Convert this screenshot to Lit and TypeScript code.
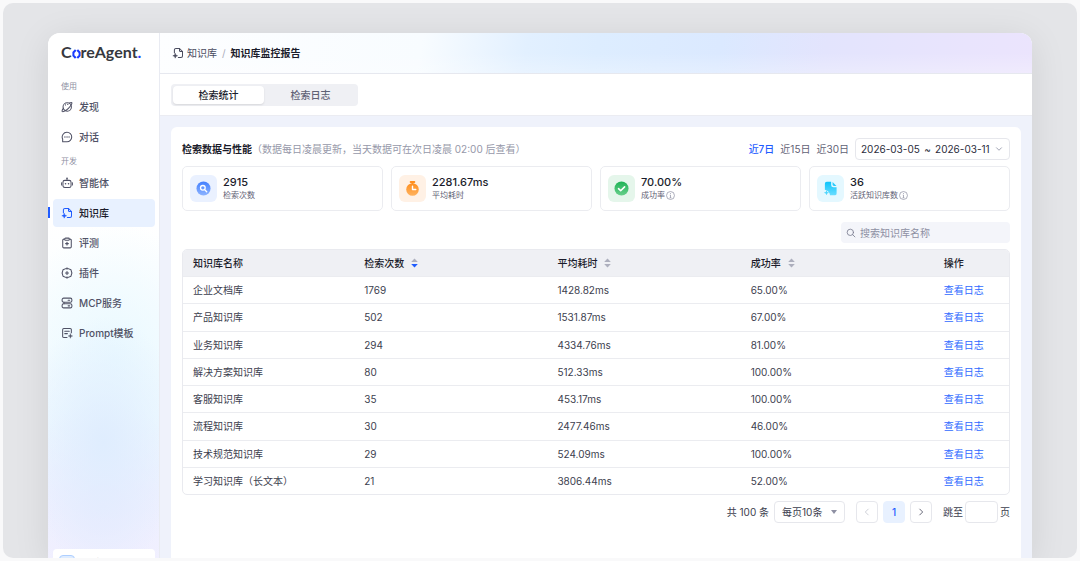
import { LitElement, html, css, svg } from "lit";
import { customElement, state } from "lit/decorators.js";
import { classMap } from "lit/directives/class-map.js";

const icons = {
  discover: svg`<circle cx="8.3" cy="8" r="5.6"/><path d="M3.4 9.6C1.8 11.6 1 13.2 1.6 13.900c1 1.100 5-1 8.300-4.200s5.300-6.700 4.400-7.600c-.5-.5-1.500-.2-2.900.600"/><path d="M6 5.200h.1M9 4.500h.1" stroke-width="1.500"/>`,
  chat: svg`<path d="M8 1.700a6.300 6.300 0 1 1 0 12.600H2.200v-3.600A6.300 6.300 0 0 1 8 1.700z"/><path d="M5.200 8h.1M8 8h.1M10.700 8h.1" stroke-width="1.700"/>`,
  robot: svg`<rect x="2.600" y="4.500" width="10.800" height="9.500" rx="2.500"/><path d="M8 4.500V1.800M.5 7.700v3M15.500 7.700v3"/><path d="M6 9h.1M10 9h.1" stroke-width="2"/><path d="M8 1.500h.1" stroke-width="2"/>`,
  knowledge: svg`<path d="M3.200 7.500V4a2 2 0 0 1 2-2H10l4 4v6a2 2 0 0 1-2 2H8.500"/><path d="M10 2v2.500A1.500 1.500 0 0 0 11.500 6H14"/><path d="M4.300 8.500l.9 2.300 2.300.9-2.300.9-.9 2.300-.9-2.300-2.300-.9 2.300-.9z" fill="currentColor" stroke-width=".6"/>`,
  evaluate: svg`<path d="M4.500 2.800H3.800A1.500 1.500 0 0 0 2.300 4.300v8.700a1.500 1.500 0 0 0 1.500 1.500h8.400a1.500 1.500 0 0 0 1.500-1.500V4.300a1.500 1.500 0 0 0-1.500-1.500h-.7"/><rect x="5" y="1.500" width="6" height="2.800" rx="1"/><path d="M8 7v3.600M6.200 8.800h3.600" stroke-width="1.600"/>`,
  plugin: svg`<path d="M8 1.500l5.300 2.200 1.200 4.300-1.200 4.200L8 14.500l-5.300-2.300L1.500 8l1.200-4.300z"/><path d="M8 6v4M6 8h4" stroke-width="1.500"/><path d="M8 1.500v1.500M8 13v1.500"/>`,
  server: svg`<rect x="1.500" y="1.500" width="13" height="5.400" rx="2"/><rect x="1.500" y="9.100" width="13" height="5.400" rx="2"/><path d="M9.500 4.200h2M9.500 11.800h2M4 6.900v2.200"/>`,
  prompt: svg`<path d="M13.800 7.500V3.500A1.500 1.500 0 0 0 12.300 2H3.700a1.500 1.500 0 0 0-1.500 1.500v9A1.500 1.500 0 0 0 3.700 14H8M5 5.600h6M5 8.800h3.500"/><path d="M12.500 9l.8 2.200 2.200.8-2.200.8-.8 2.200-.8-2.200-2.200-.8 2.200-.8z" fill="currentColor" stroke-width=".5"/>`,
};
type IconName = keyof typeof icons;

const icon = (name: IconName) => html`<svg class="icon" viewBox="0 0 16 16" aria-hidden="true">${icons[name]}</svg>`;

const stroke = (name: string, path: string) =>
  html`<svg class="stroke ${name}" viewBox="0 0 12 12" aria-hidden="true"><path d=${path} /></svg>`;

const statIcons = [
  svg`<defs><linearGradient id="g" x2="0" y2="1"><stop stop-color="#4380ff"/><stop offset="1" stop-color="#8db3ff"/></linearGradient></defs>
    <circle cx="8" cy="8" r="7.500" fill="url(#g)"/><circle cx="7.300" cy="7.300" r="2.500" fill="none" stroke="#fff" stroke-width="1.400"/><path d="M9.200 9.200l2.200 2.200" stroke="#fff" stroke-width="1.500" stroke-linecap="round"/>`,
  svg`<defs><linearGradient id="g" x2="0" y2="1"><stop stop-color="#ff8f1f"/><stop offset="1" stop-color="#ffb25e"/></linearGradient></defs>
    <rect x="5" y="0" width="6" height="2" rx="1" fill="#ff8f1f"/><path d="M7 1h2v3H7z" fill="#ff8f1f"/><circle cx="8" cy="9" r="6.700" fill="url(#g)"/><path d="M8 5.500V9h3.500" fill="none" stroke="#fff" stroke-width="1.500" stroke-linecap="round" stroke-linejoin="round"/>`,
  svg`<defs><linearGradient id="g" x2="0" y2="1"><stop stop-color="#1fb356"/><stop offset="1" stop-color="#68cf8b"/></linearGradient></defs>
    <circle cx="8" cy="8" r="7.500" fill="url(#g)"/><path d="M4.800 8.200l2.300 2.200 4.200-4.200" fill="none" stroke="#fff" stroke-width="1.700" stroke-linecap="round" stroke-linejoin="round"/>`,
  svg`<defs><linearGradient id="g" x2="0" y2="1"><stop stop-color="#0cc4fb"/><stop offset="1" stop-color="#6addff"/></linearGradient></defs>
    <path d="M4 .8h4.700v3.400a2.500 2.500 0 0 0 2.500 2.500h3.300v6.500a2 2 0 0 1-2 2H7.500a7 7 0 0 0-5.500-6V2.800a2 2 0 0 1 2-2z" fill="url(#g)"/><path d="M10.200 1l4.200 4.200h-2.700a1.500 1.500 0 0 1-1.500-1.500z" fill="#2ccbfb"/><path d="M3.700 9.700l.8 2 2 .8-2 .8-.8 2-.8-2-2-.8 2-.8z" fill="#4fd6fd"/>`,
];

const stats = [
  { value: "2915", label: "检索次数", tone: "blue", info: false },
  { value: "2281.67ms", label: "平均耗时", tone: "orange", info: false },
  { value: "70.00%", label: "成功率", tone: "green", info: true },
  { value: "36", label: "活跃知识库数", tone: "cyan", info: true },
];

const rows = [
  ["企业文档库", "1769", "1428.82ms", "65.00%"],
  ["产品知识库", "502", "1531.87ms", "67.00%"],
  ["业务知识库", "294", "4334.76ms", "81.00%"],
  ["解决方案知识库", "80", "512.33ms", "100.00%"],
  ["客服知识库", "35", "453.17ms", "100.00%"],
  ["流程知识库", "30", "2477.46ms", "46.00%"],
  ["技术规范知识库", "29", "524.09ms", "100.00%"],
  ["学习知识库（长文本）", "21", "3806.44ms", "52.00%"],
];

const base = css`
  *, *::before { box-sizing: border-box; }
  a { color: inherit; text-decoration: none; }
  button, input, select { font: inherit; color: inherit; margin: 0; padding: 0; border: 0; background: none; }
  button { cursor: pointer; }
  .icon { width: 12px; height: 12px; flex: none; fill: none; stroke: currentColor; stroke-width: 1.4; stroke-linecap: round; stroke-linejoin: round; }
  .stroke { width: 10px; height: 10px; flex: none; fill: none; stroke: currentColor; stroke-width: 1; stroke-linecap: round; stroke-linejoin: round; }
`;

@customElement("side-nav")
export class SideNav extends LitElement {
  static styles = [base, css`
    :host {
      display: flex; flex-direction: column; padding: 9px 4px 0 5px; border-right: 1px solid #e9ebf2; color: #505266;
      background:
        radial-gradient(ellipse 75% 24% at 50% 78%, #dfedfe 0%, #dfedfe00 100%),
        radial-gradient(ellipse 80% 20% at 50% 90%, #e9ebfe 0%, #e9ebfe00 100%),
        radial-gradient(ellipse 90% 26% at 60% 62%, #eaf9ff 0%, #eaf9ff00 100%),
        linear-gradient(#fff 36%, #f8fdff 55%, #f0f9ff 75%, #f1f2ff 90%, #f3f1ff);
    }
    .logo { display: flex; align-items: center; height: 20px; padding-left: 8px; font: 700 16px/20px Lato, sans-serif; color: #36383e; }
    .logo svg { width: 9px; height: 10px; fill: none; stroke: #1a3cff; stroke-width: 2; margin-top: 3px; }
    .dot { color: #1a3cff; }
    .group { font-size: 8px; line-height: 12px; color: #8e90a3; padding-left: 8px; margin: 18px 0 0; font-weight: 400; }
    .later { margin-top: 4px; padding-bottom: 1px; }
    .list { display: grid; gap: 2px; margin: 0; padding: 1px 0 0; list-style: none; }
    .item { display: flex; align-items: center; gap: 6px; height: 28px; padding-left: 8px; border-radius: 4px; font-size: 10px; font-weight: 500; white-space: nowrap; }
    .active { background: #e8f1ff; color: #1b1c2b; position: relative; }
    .active .icon { color: #1f5cff; }
    .active::before { content: ""; position: absolute; left: -5px; top: 8px; width: 2px; height: 11px; background: #1f5cff; }
    .space { display: flex; align-items: center; gap: 6px; flex: none; height: 28px; margin: auto 0 -19px; padding-left: 6px; border-radius: 4px; background: #fff; font-size: 10px; }
    .badge { width: 16px; height: 16px; border: 1px solid #aecfff; border-radius: 4px; background: #deecff; color: #5a9bff; font-size: 8px; line-height: 14px; text-align: center; }
  `];

  private group(items: [IconName, string][], active = "") {
    return html`<ul class="list">${items.map(([name, label]) => html`
      <li><a href="#" class=${classMap({ item: true, active: label === active })}>${icon(name)}${label}</a></li>`)}</ul>`;
  }

  render() {
    return html`
      <div class="logo">C<svg viewBox="0 0 9 10" aria-hidden="true"><path d="M3.700 1L1.400 3.500v3L3.700 9M5.300 1l2.300 2.500v3L5.300 9"/></svg>reAgent<span class="dot">.</span></div>
      <h2 class="group">使用</h2>
      ${this.group([["discover", "发现"], ["chat", "对话"]])}
      <h2 class="group later">开发</h2>
      ${this.group([["robot", "智能体"], ["knowledge", "知识库"], ["evaluate", "评测"], ["plugin", "插件"], ["server", "MCP服务"], ["prompt", "Prompt模板"]], "知识库")}
      <div class="space"><span class="badge">体</span>体验空间</div>`;
  }
}

@customElement("stat-card")
export class StatCard extends LitElement {
  static properties = { stat: { attribute: false }, index: { type: Number } };
  declare stat: (typeof stats)[number];
  declare index: number;

  static styles = [base, css`
    :host { display: flex; align-items: center; gap: 6px; height: 45px; padding: 0 7px; border: 1px solid #ebecf0; border-radius: 5px; }
    .tile { display: grid; place-items: center; width: 27px; height: 27px; border-radius: 6px; }
    .tile svg { width: 15px; height: 15px; }
    .blue { background: #eaf1ff; } .orange { background: #fff1e5; } .green { background: #e5f6eb; } .cyan { background: #e4f8ff; }
    .value { font-size: 11px; line-height: 14px; font-weight: 500; color: #1b1c2b; }
    .label { display: flex; align-items: center; gap: 1px; font-size: 8px; line-height: 13px; color: #5f6175; }
    .info { width: 9px; height: 9px; fill: none; stroke: #8e90a3; stroke-width: .8; }
  `];

  render() {
    const { value, label, tone, info } = this.stat;
    return html`
      <div class="tile ${tone}"><svg viewBox="0 0 16 16" aria-hidden="true">${statIcons[this.index]}</svg></div>
      <div>
        <div class="value">${value}</div>
        <div class="label">${label}${info ? html`<svg class="info" viewBox="0 0 10 10" aria-hidden="true"><circle cx="5" cy="5" r="4.400"/><path d="M5 2.300v1M4.200 4.500H5v3M4 7.500h2"/></svg>` : ""}</div>
      </div>`;
  }
}

@customElement("report-table")
export class ReportTable extends LitElement {
  static styles = [base, css`
    :host { display: block; border: 1px solid #e9eaef; border-radius: 5px; overflow: hidden; }
    .table { width: 100%; height: 244px; table-layout: fixed; border-collapse: separate; border-spacing: 0; text-align: left; color: #3c3e4e; }
    .name { width: 171px; } .num { width: 193px; } .act { width: 75px; }
    .table th, .table td { padding: 0 10px; font-size: 10px; line-height: 14px; white-space: nowrap; }
    .table th { height: 26px; background: #eff0f4; font-weight: 500; color: #1b1c2b; }
    .table td { height: 27px; border-top: 1px solid #ebecf0; }
    .sort { display: inline-flex; align-items: center; gap: 7px; font-weight: 500; }
    .arrows { width: 7px; height: 10px; fill: #adafbd; }
    .arrows .on { fill: #1f5cff; }
    .link { color: #2f6bff; }
  `];

  private sort(label: string, down = false) {
    return html`<button class="sort" type="button">${label}<svg class="arrows" viewBox="0 0 7 10" aria-hidden="true">
      <path d="M3.500 .5L6.800 4H.2z"/><path class=${down ? "on" : ""} d="M3.500 9.500L6.800 6H.2z"/></svg></button>`;
  }

  render() {
    return html`<table class="table">
      <colgroup><col class="name"><col class="num"><col class="num"><col class="num"><col class="act"></colgroup>
      <thead><tr><th>知识库名称</th><th>${this.sort("检索次数", true)}</th><th>${this.sort("平均耗时")}</th><th>${this.sort("成功率")}</th><th>操作</th></tr></thead>
      <tbody>${rows.map((row) => html`<tr>${row.map((cell) => html`<td>${cell}</td>`)}<td><a class="link" href="#">查看日志</a></td></tr>`)}</tbody>
    </table>`;
  }
}

@customElement("app-root")
export class AppRoot extends LitElement {
  @state() private tab = "检索统计";
  @state() private range = "近7日";

  static styles = [base, css`
    :host { display: flex; height: 100vh; padding: 3px; box-sizing: border-box; background: #f9f9fa; font-family: Inter, "Noto Sans CJK SC", sans-serif; font-size: 10px; line-height: 14px; color: #3c3e4e; }
    .stage { flex: 1; display: flex; min-width: 0; padding: 30px 45px 0; border-radius: 10px; overflow: hidden; background: #e4e5e8; }
    .window { flex: 1; min-width: 0; display: grid; grid-template-columns: 112px minmax(0, 1fr); border-radius: 12px 12px 0 0; overflow: hidden; background: #fff; box-shadow: 0 6px 36px #00000018; }
    .main { display: flex; flex-direction: column; min-width: 0; background: #eff2fb; }
    .crumbs { display: flex; align-items: center; height: 41px; padding-left: 12px; border-bottom: 1px solid #e6e8ef; color: #4a4c5f;
      background: linear-gradient(#ffffff00 50%, #ffffff40), linear-gradient(100deg, #fdfeff 0%, #f8fcff 30%, #e2f0ff 42%, #ddedff 50%, #dbe9ff 64%, #e3e4fd 76%, #e9e4fd 92%, #ebe4fd); }
    .crumbs a { margin-left: 3px; }
    .slash { margin: 0 5px; color: #a9abba; }
    .here { font-weight: 700; color: #1b1c2b; }
    .tabbar { padding: 10px 11px 9px; background: #fff; border-bottom: 1px solid #ebecf2; }
    .tabs { display: inline-grid; grid-template-columns: 91px 91px; gap: 1px; padding: 2px; border-radius: 4px; background: #eff0f4; vertical-align: top; }
    .tab { height: 18px; border-radius: 4px; color: #5f6175; font-weight: 500; }
    .tab.on { background: #fff; color: #1b1c2b; box-shadow: 0 1px 2px #0000001a; }
    .card { flex: 1; margin: 11px 11px 0; padding: 11px; border-radius: 6px 6px 0 0; background: #fff; }
    .bar { display: flex; align-items: center; }
    .title { margin: 0; font-size: 10px; font-weight: 700; color: #1b1c2b; }
    .note { color: #9698a9; }
    .ranges { display: flex; gap: 6px; margin: 0 6px 0 auto; color: #5f6175; }
    .ranges .on { color: #1f5cff; font-weight: 500; }
    .date { display: flex; align-items: center; justify-content: space-between; width: 155px; height: 22px; padding: 0 5px; border: 1px solid #e6e7ec; border-radius: 4px; color: #2b2d3c; white-space: pre; }
    .date .stroke { color: #8e90a3; }
    .stats { display: grid; grid-template-columns: repeat(4, minmax(0, 1fr)); gap: 8px; margin: 6px 0 11px; }
    .search { display: flex; align-items: center; gap: 4px; width: 169px; height: 21px; margin: 0 0 6px auto; padding-left: 5px; border-radius: 4px; background: #f4f5fa; color: #7b7d90; }
    .search input { flex: 1; min-width: 0; outline: 0; }
    .search input::placeholder { color: #8e90a3; opacity: 1; }
    .pager { display: flex; align-items: center; justify-content: flex-end; gap: 5px; margin-top: 6px; }
    .size { position: relative; display: flex; align-items: center; margin-right: 6px; }
    .size select { appearance: none; width: 71px; height: 22px; padding: 0 7px; border: 1px solid #e6e7ec; border-radius: 4px; }
    .caret { position: absolute; right: 8px; width: 6px; height: 4px; fill: #8e90a3; pointer-events: none; }
    .page { display: grid; place-items: center; width: 22px; height: 22px; border: 1px solid #e6e7ec; border-radius: 4px; color: #4a4c5f; }
    .page.on { border-color: #e8f1ff; background: #e8f1ff; color: #1f5cff; font-weight: 500; }
    .page:disabled { color: #c4c6d0; }
    .jump { display: flex; align-items: center; gap: 2px; margin-left: 6px; }
    .jump input { width: 33px; height: 22px; border: 1px solid #e6e7ec; border-radius: 4px; text-align: center; }
  `];

  render() {
    return html`
      <div class="stage">
        <div class="window">
          <side-nav></side-nav>
          <main class="main">
            <nav class="crumbs">${icon("knowledge")}<a href="#">知识库</a><span class="slash">/</span><span class="here">知识库监控报告</span></nav>
            <div class="tabbar"><div class="tabs" role="tablist">${["检索统计", "检索日志"].map((t) => html`
              <button type="button" role="tab" aria-selected=${this.tab === t} class=${classMap({ tab: true, on: this.tab === t })} @click=${() => (this.tab = t)}>${t}</button>`)}</div></div>
            <section class="card">
              <div class="bar">
                <h1 class="title">检索数据与性能</h1>
                <span class="note">（数据每日凌晨更新，当天数据可在次日凌晨 02:00 后查看）</span>
                <div class="ranges">${["近7日", "近15日", "近30日"].map((r) => html`
                  <button type="button" class=${classMap({ on: this.range === r })} @click=${() => (this.range = r)}>${r}</button>`)}</div>
                <button type="button" class="date" aria-haspopup="dialog"><span>2026-03-05</span><span>~</span><span>2026-03-11</span>${stroke("down", "M3 4.500l3 3 3-3")}</button>
              </div>
              <div class="stats">${stats.map((s, i) => html`<stat-card .stat=${s} .index=${i}></stat-card>`)}</div>
              <label class="search">${stroke("find", "M9 5.200a3.800 3.800 0 1 1-7.600 0 3.800 3.800 0 0 1 7.600 0zM8 8l2.700 2.700")}<input type="text" aria-label="搜索知识库名称" placeholder="搜索知识库名称"></label>
              <report-table></report-table>
              <div class="pager">
                <span>共 100 条</span>
                <label class="size"><select aria-label="每页条数"><option>每页10条</option></select><svg class="caret" viewBox="0 0 6 4" aria-hidden="true"><path d="M0 0h6L3 4z"/></svg></label>
                <button type="button" class="page" disabled aria-label="上一页">${stroke("prev", "M7.500 2.500L4 6l3.500 3.500")}</button>
                <button type="button" class="page on">1</button>
                <button type="button" class="page" aria-label="下一页">${stroke("next", "M4.500 2.500L8 6 4.500 9.500")}</button>
                <label class="jump">跳至<input type="text">页</label>
              </div>
            </section>
          </main>
        </div>
      </div>`;
  }
}
